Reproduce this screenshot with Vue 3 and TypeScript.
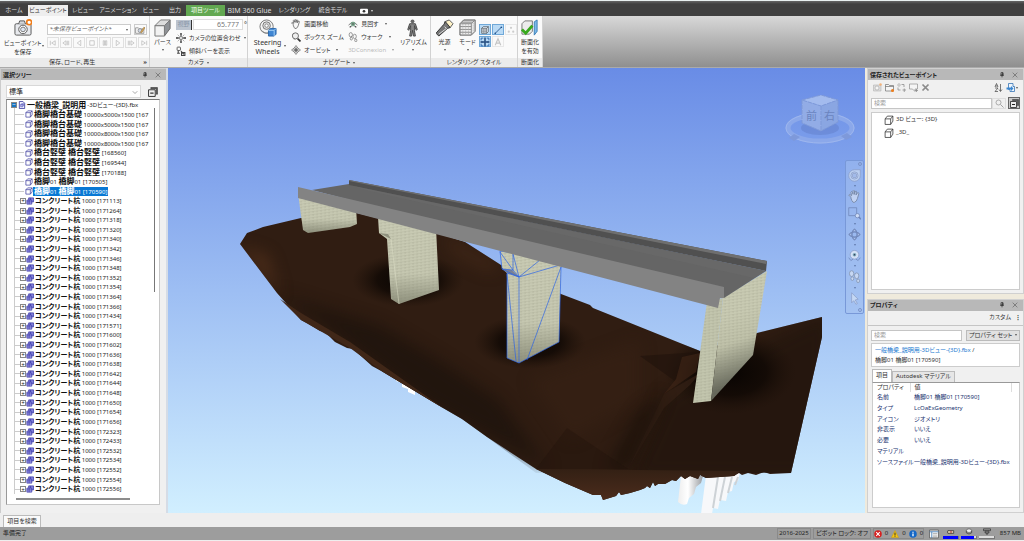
<script setup lang="ts">
import { ref } from 'vue'

const icons: Record<string, string> = {
  camera: '<rect x="1" y="5" width="17" height="12" rx="1.5" fill="#e8eaee" stroke="#555" /><path d="M5 5l1-3h5l1 3" fill="#d5d8dc" stroke="#555"/><circle cx="9.500" cy="11" r="4.500" fill="#fff" stroke="#555"/><circle cx="9.500" cy="11" r="2.500" fill="#dfe7f2" stroke="#777"/><circle cx="16" cy="3.500" r="2.600" fill="#fff" stroke="#ef7d1a" stroke-width="1.700"/>',
  folderCam: '<path d="M1 5h5l2 2h8v8H1z" fill="#f3f3f3" stroke="#666"/><circle cx="9" cy="10" r="3.500" fill="#cfd8e6" stroke="#666"/><path d="M10 13l6-9 2 1-6 9z" fill="#f0b45c" stroke="#8a6a30"/>',
  box: '<path d="M11 7l6-6v9l-6 8z" fill="#8f9296" stroke="#666"/><path d="M1 7h10v11H1z" fill="#f2f2f2" stroke="#777"/><path d="M1 7l6-6h10l-6 6z" fill="#ddd" stroke="#777"/>',
  target: '<circle cx="9" cy="9" r="3" fill="#ddd" stroke="#444"/><path d="M9 0v5M9 13v5M0 9h5M13 9h5" stroke="#333" stroke-width="2.500"/><path d="M3 3l3 3M15 3l-3 3M3 15l3-3M15 15l-3-3" stroke="#777"/>',
  tilt: '<rect x="2" y="2" width="6" height="6" rx="1" fill="#fff" stroke="#444" stroke-width="1.500"/><path d="M4 8v5M9 9l5 6M2 13h5M10 12h6v5h-6z" stroke="#444" stroke-width="2" fill="none"/>',
  wheel: '<circle cx="8" cy="8" r="7" fill="#f4f4f4" stroke="#777"/><circle cx="8" cy="7" r="4" fill="#ddd" stroke="#777"/><circle cx="8" cy="7" r="1.800" fill="#fff" stroke="#888"/><path d="M2 12q5 4 8 3" stroke="#888" fill="none"/><path d="M10 12l2-2h6v6l-2 2h-6z" fill="#3f86d3" stroke="#2b67a8"/><path d="M10 12h6v6M16 12l2-2" stroke="#a6d0f6" fill="none"/>',
  hand: '<path d="M4 10L1 7q1-2 4 1L4 3q1-2 2 0l1 3V1q1-2 2 0v5l1-4q2-1 2 1l-1 4 2-3q2-1 2 1l-2 7q-1 4-4 5H7q-2-2-3-6z" fill="#f7f7f7" stroke="#555" stroke-width="1.300"/>',
  zoom: '<path d="M2 5a5 5 0 1 1 3 8" fill="none" stroke="#666"/><circle cx="8" cy="7" r="5.500" fill="#eee" stroke="#555" stroke-width="1.500"/><path d="M12 12l5 5" stroke="#333" stroke-width="3"/>',
  orbit: '<path d="M9 1l3 4h-2v8h2l-3 4-3-4h2V5H6zM1 9l4-3v2h8V6l4 3-4 3v-2H5v2z" fill="#fff" stroke="#555" stroke-width="1.200"/>',
  look: '<path d="M1 11Q9 2 17 11" fill="none" stroke="#666" stroke-width="1.500"/><circle cx="9" cy="9" r="3.500" fill="#9fc8af" stroke="#397757"/><circle cx="9" cy="9" r="1.500" fill="#222"/><path d="M3 15l3-2M15 15l-3-2" stroke="#444" stroke-width="2"/>',
  feet: '<ellipse cx="5" cy="5" rx="3" ry="4" fill="#f7f7f7" stroke="#555"/><ellipse cx="6" cy="12" rx="2" ry="2.500" fill="#f7f7f7" stroke="#555"/><ellipse cx="12" cy="8" rx="3" ry="4" fill="#f7f7f7" stroke="#555"/><ellipse cx="14" cy="15" rx="2" ry="2.500" fill="#f7f7f7" stroke="#555"/>',
  person: '<circle cx="9" cy="2.500" r="2" fill="#666"/><path d="M6 5h6l2 6-1 1-2-5v5l1 6h-2l-1-6-1 6H6l1-6V7l-2 5-1-1z" fill="#888" stroke="#444"/>',
  lamp: '<path d="M9 3l5-2 4 4-3 4-5-1z" fill="#fff3c8" stroke="#555"/><path d="M10 3l5 6-3 1-9 8-3-3 8-9z" fill="#777" stroke="#333"/><path d="M9 8l2 2-8 6" fill="none" stroke="#ddd"/>',
  mode: '<path d="M1 5l4-4h12v12l-4 4H1z" fill="#eee" stroke="#555"/><path d="M1 5h12v12M13 5l4-4M1 8h12M1 11h12M1 14h12M4 2h12M3 4h11" fill="none" stroke="#888"/><path d="M4 5v12M7 5v12M10 5v12M15 4v11" stroke="#aaa" stroke-dasharray="1 1"/>',
  surf: '<path d="M3 6l3-3h9v9l-3 3H3zM3 6h9v9M12 6l3-3" fill="#e5f2ff" stroke="#333"/><path d="M3 9h9M3 12h9M6 6v9M9 6v9" stroke="#777"/>',
  line: '<path d="M4 15L15 4" stroke="#1d4e89" stroke-width="1.500"/><circle cx="4" cy="15" r="1.500" fill="#1d4e89"/><circle cx="15" cy="4" r="1.500" fill="#1d4e89"/>',
  dots: '<circle cx="9" cy="5" r="2" fill="#ccc"/><circle cx="5" cy="12" r="2" fill="#ccc"/><circle cx="13" cy="12" r="2" fill="#ccc"/>',
  snap: '<path d="M9 1v6M9 11v6M1 9h6M11 9h6" stroke="#123a70" stroke-width="2.500"/><path d="M2 2h4M2 2v4M16 2h-4M16 2v4M2 16h4M2 16v-4M16 16h-4M16 16v-4" stroke="#1d5ba8" stroke-width="1.500"/><circle cx="9" cy="9" r="2" fill="#123a70"/>',
  textA: '<path d="M4 15L9 3l5 12M6 11h6" fill="none" stroke="#c4c4c4" stroke-width="2"/>',
  section: '<path d="M1 5l3-3h8v11l-3 3H1z" fill="#ececec" stroke="#777"/><path d="M14 3l3-2v12l-3 4z" fill="#7cb9e8" stroke="#3a7fb8"/><path d="M1 11l4 4 7-8" fill="none" stroke="#38a81c" stroke-width="3"/>',
  cube: '<path d="M2 6l4-4h10v9l-4 5H2z" fill="#fff" stroke="#3a3a9c" stroke-width="1.600"/><path d="M2 6h10v10M12 6l4-4" fill="none" stroke="#3a3a9c" stroke-width="1.600"/>',
  group: '<path d="M6 2h11v9H6z" fill="#8684dc" stroke="#3330a0" stroke-width="1.600"/><path d="M2 7h11v9H2z" fill="#a7a5ee" stroke="#3330a0" stroke-width="1.600"/><path d="M2 11h11M7 7v9M10 2v5" stroke="#3330a0" stroke-width="1.400"/>',
  doc: '<path d="M3 1h8l4 4v12H3z" fill="#eef" stroke="#33339a" stroke-width="1.800"/><path d="M6 13V8h5v5zM6 8l2-2h5v5" fill="#b9b9f4" stroke="#33339a"/>',
  outline: '<path d="M2 7l4-5h10v9l-4 6H2zM2 7h10v10M12 7l4-5" fill="#fff" stroke="#333" stroke-width="1.400"/>',
  solid: '<path d="M5 1h12v12h-2V3H5z" fill="#666" stroke="#222"/><path d="M1 5h12v12H1z" fill="#eee" stroke="#222" stroke-width="1.600"/><path d="M4 11h6" stroke="#222" stroke-width="2"/>',
  pin: '<path d="M6 2h6v7H6zM3 10h12M9 10v6M11 2v8" fill="none" stroke="#222" stroke-width="2"/>',
  close: '<path d="M2 2l14 14M16 2L2 16" stroke="#444" stroke-width="1.500"/>',
  addCam: '<path d="M1 4h15v12H1z" fill="#ddd" stroke="#aaa"/><circle cx="8" cy="10" r="4" fill="#f5f5f5" stroke="#999"/><circle cx="15" cy="3" r="2.500" fill="#f3b27a"/>',
  addFolder: '<path d="M1 3h6l2 2h8v11H1zM1 7h16" fill="#f5f5f5" stroke="#666" stroke-width="1.300"/><circle cx="15" cy="15" r="3" fill="#ef7d1a"/>',
  swap: '<circle cx="4" cy="4" r="2.500" fill="none" stroke="#888"/><path d="M9 3h5v5M2 9v5h5M11 14h7M14.500 11v7" fill="none" stroke="#888" stroke-width="1.500"/>',
  comment: '<path d="M1 2h16v10h-5v5l-5-5H1z" fill="#f5f5f5" stroke="#888" stroke-width="1.300"/><path d="M12 15h6M15 12v6" stroke="#888" stroke-width="1.500"/>',
  del: '<path d="M3 3l12 12M15 3L3 15" stroke="#8b8b8b" stroke-width="3.500"/>',
  sort: '<path d="M2 8l3-7 3 7M3 6h4M2 10h6l-6 7h6M13 2v14M10 13l3 4 3-4" fill="none" stroke="#444" stroke-width="1.400"/>',
  importer: '<path d="M5 1h9v6h3v10H8v-4H5z" fill="#eef5fc" stroke="#2b6cb0" stroke-width="1.500"/><path d="M1 9h9V6l5 5-5 5v-3H1z" fill="#3a86d0"/>',
  search: '<circle cx="7" cy="7" r="5" fill="none" stroke="#888" stroke-width="1.300"/><path d="M11 11l6 6" stroke="#888" stroke-width="1.500"/>',
  navWheel: '<path d="M9 1h8v8a8 8 0 1 1-8-8z" fill="#bcd0f1" stroke="#8a9cc6"/><rect x="6" y="6" width="6" height="6" rx="2" fill="#a3bbea" stroke="#8a9cc6"/><circle cx="9" cy="9" r="5" fill="none" stroke="#8a9cc6"/>',
  navZoom: '<path d="M1 1h11v11H1z" fill="none" stroke="#6d83b5"/><circle cx="13" cy="12" r="3" fill="#cddcf6" stroke="#6d83b5"/><path d="M15 14l3 3" stroke="#6d83b5" stroke-width="2"/>',
  navOrbit: '<path d="M9 1l3 4H6zM9 17l3-4H6zM1 9l4-3v6zM17 9l-4-3v6z" fill="#a9bfe9" stroke="#6d83b5"/><ellipse cx="9" cy="9" rx="7" ry="3" fill="none" stroke="#6d83b5"/><ellipse cx="9" cy="9" rx="3" ry="7" fill="none" stroke="#6d83b5"/>',
  navLook: '<circle cx="9" cy="8" r="6" fill="#d3e0f6" stroke="#8a9cc6"/><circle cx="9" cy="8" r="2.500" fill="#7ba8b8"/><circle cx="9" cy="8" r="1" fill="#335"/><path d="M1 12l3 4 3-2M17 12l-3 4-3-2" fill="none" stroke="#6d83b5"/>',
  pointer: '<path d="M5 1l9 9-4 1 3 5-2 1-3-5-3 3z" fill="#c5d8f4" stroke="#8a9cc6"/>',
  error: '<circle cx="9" cy="9" r="8.500" fill="#d81e1e"/><path d="M5 5l8 8M13 5l-8 8" stroke="#fff" stroke-width="2.500"/>',
  warn: '<path d="M9 1l8 16H1z" fill="#f6c515" stroke="#c99a00"/><path d="M9 6v6M9 13v2" stroke="#222" stroke-width="2"/>',
  info: '<circle cx="9" cy="9" r="8.500" fill="#1467c6"/><path d="M9 8v6M9 4v2" stroke="#fff" stroke-width="3"/>',
  sheet: '<path d="M1 2h16v14H1z" fill="#fff" stroke="#444" stroke-width="1.200"/><path d="M1 5h16M5 5v11" stroke="#3c78b4" stroke-width="1.500"/><path d="M7 8h8M7 11h8M7 14h8" stroke="#777"/>',
  pencil: '<path d="M2 6h13v6H2l-1-3z" fill="#e8d4b6" stroke="#222" stroke-width="1.500"/><path d="M9 6v6" stroke="#a22" stroke-width="2"/>',
  disk: '<ellipse cx="9" cy="6" rx="6" ry="4" fill="#eee" stroke="#333"/><path d="M3 6v5q6 5 12 0V6" fill="none" stroke="#333" stroke-width="1.500"/>',
  net: '<path d="M1 2h16v4H1zM9 6v9M3 9l6 5 6-5M6 6v5M12 6v5" fill="none" stroke="#222" stroke-width="1.400"/>',
  media: '<rect x="0" y="4" width="18" height="11" rx="2" fill="#fff"/><circle cx="9" cy="9.500" r="3" fill="#333"/>',
}

const tabs = [
  { t: 'ホーム', w: 28 }, { t: 'ビューポイント', w: 40 }, { t: 'レビュー', w: 30 }, { t: 'アニメーション', w: 40 },
  { t: 'ビュー', w: 26 }, { t: '出力', w: 22 }, { t: '項目ツール', w: 39 }, { t: 'BIM 360 Glue', w: 49 },
  { t: 'レンダリング', w: 41 }, { t: '統合モデル', w: 36 },
]
const transport = ['M3 4v10M14 4L6 9l8 5z', 'M9 4L2 9l7 5zM12 4v10M15 4v10', 'M13 3L5 9l8 6z', 'M4 4h10v10H4z', 'M5 4h3v10H5zM10 4h3v10h-3z', 'M5 3l8 6-8 6z', 'M3 4v10M6 4v10M9 4l7 5-7 5z', 'M4 4l8 5-8 5zM15 4v10']

interface Node { kind: string; name: string; tail: string }
const solids: Node[] = [
  ...['10000x5000x1500 [167', '10000x5000x1500 [167', '10000x8000x1500 [167', '10000x8000x1500 [167'].map(t => ({ kind: 'solid', name: '橋脚橋台基礎', tail: t })),
  ...['168560', '169544', '170188'].map(t => ({ kind: 'solid', name: '橋台竪壁 橋台竪壁', tail: `[${t}]` })),
  ...['170505', '170590'].map(t => ({ kind: 'pier', name: '橋脚', tail: `[${t}]` })),
]
const piles = '171113 171264 171318 171320 171340 171342 171346 171348 171352 171354 171364 171366 171434 171571 171600 171602 171636 171638 171642 171644 171648 171650 171654 171656 172323 172433 172532 172534 172552 172554 172556'.split(' ')
const nodes: Node[] = [...solids, ...piles.map(p => ({ kind: 'pile', name: 'コンクリート杭', tail: `1000 [${p}]` }))]
const selected = ref('[170590]')

const props = [
  ['名前', '橋脚01 橋脚01 [170590]'], ['タイプ', 'LcOaExGeometry'], ['アイコン', 'ジオメトリ'],
  ['非表示', 'いいえ'], ['必要', 'いいえ'], ['マテリアル', ''], ['ソースファイル', '一般橋梁_説明用-3Dビュー-{3D}.fbx'],
]
const navTools = [
  { i: 'navWheel', l: 'ホイール', d: true }, { i: 'hand', l: '画面移動', d: false }, { i: 'navZoom', l: 'ズーム', d: true },
  { i: 'navOrbit', l: 'オービット', d: true }, { i: 'navLook', l: '見回す', d: true }, { i: 'feet', l: 'ウォーク', d: true }, { i: 'pointer', l: '選択', d: false },
]
const meters = [{ i: 'pencil', v: 100 }, { i: 'disk', v: 92 }, { i: 'net', v: 0 }]
</script>

<template>
  <div class="app">
    <header>
      <div class="topline"></div>
      <nav class="tabs">
        <button v-for="(tab, n) in tabs" :key="tab.t" class="tab" :class="{ active: n === 1, ctx: n === 6, latin: n === 7 }" :style="{ width: tab.w + 'px' }">{{ tab.t }}</button>
        <button class="media" aria-label="表示切替"><svg class="i8" viewBox="0 0 18 18" v-html="icons.media"></svg><i class="dn"></i></button>
      </nav>
      <div class="ribbon">
        <section class="group g1">
          <div class="body">
            <button class="big b1"><svg class="i18" viewBox="0 0 19 19" v-html="icons.camera"></svg><span>ビューポイント<br>を保存</span></button>
            <i class="dn low"></i>
            <div class="stack">
              <div class="line">
                <button class="combo"><em>*未保存ビューポイント*</em><i class="dn"></i></button>
                <button class="tool"><svg class="i10" viewBox="0 0 18 18" v-html="icons.folderCam"></svg></button>
              </div>
              <div class="transport">
                <button v-for="p in transport" :key="p"><svg class="i8" viewBox="0 0 18 18"><path :d="p" fill="none" stroke="#b5b5b5" stroke-width="1.5" /></svg></button>
              </div>
            </div>
          </div>
          <footer><span>保存、ロード、再生</span><b class="corner">»</b></footer>
        </section>
        <section class="group g2">
          <div class="body">
            <button class="big b2"><svg class="i18" viewBox="0 0 19 19" v-html="icons.box"></svg><span>パース</span><i class="dn"></i></button>
            <div class="stack">
              <div class="line fov"><label for="fov">視野</label><input id="fov" value="65.777"><span>°</span></div>
              <button class="cmd"><svg class="i10" viewBox="0 0 18 18" v-html="icons.target"></svg><span class="k">カメラの位置合わせ</span><i class="dn"></i></button>
              <button class="cmd"><svg class="i10" viewBox="0 0 18 18" v-html="icons.tilt"></svg><span class="k">傾斜バーを表示</span></button>
            </div>
          </div>
          <footer><span>カメラ</span><i class="dn"></i></footer>
        </section>
        <section class="group g3">
          <div class="body">
            <button class="big b3"><svg class="i18" viewBox="0 0 19 19" v-html="icons.wheel"></svg><span class="latin">Steering<br>Wheels</span></button>
            <i class="dn low"></i>
            <div class="stack s3a">
              <button class="cmd"><svg class="i10" viewBox="0 0 18 18" v-html="icons.hand"></svg><span class="k">画面移動</span></button>
              <button class="cmd"><svg class="i10" viewBox="0 0 18 18" v-html="icons.zoom"></svg><span class="k">ボックス ズーム</span><i class="dn"></i></button>
              <button class="cmd"><svg class="i10" viewBox="0 0 18 18" v-html="icons.orbit"></svg><span class="k">オービット</span><i class="dn"></i></button>
            </div>
            <div class="stack s3b">
              <button class="cmd"><svg class="i10" viewBox="0 0 18 18" v-html="icons.look"></svg><span class="k">見回す</span><i class="dn"></i></button>
              <button class="cmd"><svg class="i10" viewBox="0 0 18 18" v-html="icons.feet"></svg><span class="k">ウォーク</span><i class="dn"></i></button>
              <button class="cmd off" disabled><span class="k">3DConnexion</span><i class="dn"></i></button>
            </div>
            <button class="big b4"><svg class="i18" viewBox="0 0 19 19" v-html="icons.person"></svg><span>リアリズム</span><i class="dn"></i></button>
          </div>
          <footer><span>ナビゲート</span><i class="dn"></i></footer>
        </section>
        <section class="group g4">
          <div class="body">
            <button class="big b5"><svg class="i18" viewBox="0 0 19 19" v-html="icons.lamp"></svg><span>光源</span><i class="dn"></i></button>
            <button class="big b5"><svg class="i18" viewBox="0 0 19 19" v-html="icons.mode"></svg><span>モード</span><i class="dn"></i></button>
            <div class="toggles">
              <button v-for="(n, k) in ['surf', 'line', 'dots', 'snap', 'textA']" :key="n" :class="{ on: k < 2 || k === 3 }"><svg class="i10" viewBox="0 0 18 18" v-html="icons[n]"></svg></button>
            </div>
          </div>
          <footer><span>レンダリング スタイル</span></footer>
        </section>
        <section class="group g5">
          <div class="body"><button class="big b5"><svg class="i18" viewBox="0 0 19 19" v-html="icons.section"></svg><span>断面化<br>を有効</span></button></div>
          <footer><span>断面化</span></footer>
        </section>
      </div>
    </header>

    <main>
      <aside class="left">
        <div class="title"><h2>選択ツリー</h2><button aria-label="固定"><svg class="i7" viewBox="0 0 18 18" v-html="icons.pin"></svg></button><button aria-label="閉じる"><svg class="i7" viewBox="0 0 18 18" v-html="icons.close"></svg></button></div>
        <div class="pick">
          <select aria-label="ツリーの種類"><option>標準</option></select>
          <svg class="chev" viewBox="0 0 8 8"><path d="M1 3l3 3 3-3" fill="none" stroke="#888" /></svg>
          <button aria-label="選択解除"><svg class="i10" viewBox="0 0 18 18" v-html="icons.solid"></svg></button>
        </div>
        <div class="treebox">
          <ul class="tree">
            <li class="root"><i class="pm">−</i><svg class="i8" viewBox="0 0 18 18" v-html="icons.doc"></svg><b>一般橋梁_説明用</b><span>-3Dビュー-{3D}.fbx</span></li>
            <li v-for="(n, k) in nodes" :key="k" :class="[n.kind, { sel: n.tail === selected }]" @click="selected = n.tail">
              <i class="guide"></i><i v-if="n.kind === 'pile'" class="pm">+</i>
              <svg class="i8" viewBox="0 0 18 18" v-html="n.kind === 'pile' ? icons.group : icons.cube"></svg>
              <span class="txt"><template v-if="n.kind === 'pier'"><b>橋脚</b>01 <b>橋脚</b>01</template><b v-else>{{ n.name }}</b> {{ n.tail }}</span>
            </li>
          </ul>
          <div class="hbar"></div>
          <div class="vbar"></div>
        </div>
      </aside>

      <section class="view">
        <svg class="scene" viewBox="168 68 697 445" preserveAspectRatio="xMidYMid slice" role="img" aria-label="橋梁モデル">
          <defs>
            <linearGradient id="sky" x2="0" y2="1"><stop offset="0" stop-color="#698ce6" /><stop offset=".5" stop-color="#9dbef3" /><stop offset="1" stop-color="#d1efff" /></linearGradient>
            <linearGradient id="conc" x2="0" y2="1"><stop offset="0" stop-color="#c9cbb4" /><stop offset=".65" stop-color="#c5c7b0" /><stop offset="1" stop-color="#8e907c" /></linearGradient>
            <linearGradient id="wall" gradientUnits="userSpaceOnUse" x1="715" y1="320" x2="738" y2="384"><stop offset="0" stop-color="#c8cab2" /><stop offset=".4" stop-color="#bfc1a9" /><stop offset="1" stop-color="#65675a" /></linearGradient>
            <linearGradient id="skirt" x2="0" y2="1"><stop offset="0" stop-color="#332014" /><stop offset="1" stop-color="#4b2c1c" /></linearGradient>
            <linearGradient id="pile"><stop offset="0" stop-color="#eee" /><stop offset=".4" stop-color="#fff" /><stop offset="1" stop-color="#999ca0" /></linearGradient>
            <radialGradient id="shade"><stop offset="0" stop-color="#080402" /><stop offset=".55" stop-color="#0f0804" stop-opacity=".8" /><stop offset="1" stop-color="#1d1109" stop-opacity="0" /></radialGradient>
            <pattern id="brick" width="4" height="3" patternUnits="userSpaceOnUse" patternTransform="skewY(-8)"><path d="M0 0h4M1 0v2" stroke="#777b65" stroke-width=".5" opacity=".4" /></pattern>
            <filter id="soft" x="-50%" y="-50%" width="200%" height="200%" color-interpolation-filters="sRGB"><feGaussianBlur stdDeviation="8" /></filter>
            <clipPath id="ground"><path d="M240 244L247 233 263 227 301 218 357 213 377 218 437 233 465 242 501 265 561 294 590 305 593 308 700 351 757 333 822 317 822 337 791 473H536L487 437 462 419 443 408 383 372 350 347 301 320 277 293z" /></clipPath>
          </defs>
          <path d="M168 68h697v445H168z" fill="url(#sky)" />
          <path d="M391 375l5 1v5l6 2v4l6 2v3l7 3v-6l-18-14z" fill="#fff" />
          <path d="M681 476l-3 26q4 4 9 2l2-6 5-4 2-7 5-4 2-7z" fill="url(#pile)" />
          <path d="M706 475l-5 39h11l1-6 5 1 2-9 6 1 2-9 4-1 2-9 4-1 2-9z" fill="#f7f8fa" />
          <path d="M718 477l-5 31M725 477l-5 24M732 477l-4 16M738 477l-3 8" stroke="#cdd2d6" stroke-width="2" />
          <path d="M240 244L247 233 263 227 301 218 357 213 377 218 437 233 465 242 501 265 561 294 590 305 593 308 700 351 757 333 822 317 822 337 791 473 770 474 764 472 756 475 748 473 742 475 739 473 734 476 706 478 700 475 698 479 690 476 685 479 681 476 676 481 672 480 665 484 658 484 655 486 653 482 650 488 647 486 645 488 640 490 630 493 621 495 619 492 616 496 603 500 601 495 593 495 565 483 536 469 487 437 462 419 443 408 383 372 372 366 353 349 347 348 335 342 325 332 320 331 307 323 301 320 293 311 277 293z" fill="#301d12" />
          <g clip-path="url(#ground)">
            <path d="M628 480L664 394 700 373 830 310V480z" fill="#23160e" opacity=".8" filter="url(#soft)" />
            <path d="M277 293L380 325 440 360 500 400 550 470 430 405 350 345z" fill="#1f140d" opacity=".85" filter="url(#soft)" />
            <path d="M530 380L640 340 640 400 570 440z" fill="#382215" opacity=".6" filter="url(#soft)" />
            <path d="M236 246L280 298 268 255z" fill="#55331d" opacity=".7" filter="url(#soft)" />
            <path d="M440 233L501 265 490 272 455 255z" fill="#4a2d1b" opacity=".6" filter="url(#soft)" />
            <ellipse cx="408" cy="280" rx="56" ry="27" fill="url(#shade)" />
            <ellipse cx="530" cy="342" rx="56" ry="27" fill="url(#shade)" />
            <ellipse cx="730" cy="372" rx="66" ry="42" fill="url(#shade)" />
            <path d="M640 356L700 352 682 368 675 381z" fill="#20130b" opacity=".6" />
            <path d="M682 357L700 353 696 372 664 394 676 379z" fill="#412718" opacity=".6" />
            <path d="M664 394L700 373 690 385 664 408 628 469z" fill="#352115" opacity=".7" />
            <path d="M664 394L628 469 606 469 640 410z" fill="#1b110a" opacity=".8" filter="url(#soft)" />
            <path d="M536 469L567 428 628 469z" fill="#1d120b" opacity=".3" />
          </g>
          <path d="M280 299L301 313 350 342 443 408 383 372 350 348 301 320z" fill="#402718" />
          <path d="M536 469L740 471 734 476 706 478 700 475 698 479 690 476 685 479 681 476 676 481 672 480 665 484 658 484 655 486 653 482 650 488 647 486 645 488 640 490 630 493 621 495 619 492 616 496 603 500 601 495 593 495 565 483z" fill="url(#skirt)" />
          <g><path d="M298 193L303 230 308 233 350 227 357 224 356 208z" fill="url(#conc)" /><path d="M298 193L303 230 308 233 350 227 357 224 356 208z" fill="url(#brick)" /></g>
          <g><path d="M378 217L379 233 387 239 391 299 399 304 439 290 436 228z" fill="url(#conc)" /><path d="M378 217L379 233 387 239 391 299 399 304 439 290 436 228z" fill="url(#brick)" /><path d="M379 233L391 239 388 234z" fill="#8f917e" /><path d="M391 239L399 304" stroke="#dfe1c8" stroke-width=".7" opacity=".7" /></g>
          <g><path d="M500 248L502 268 507 273 507 358 519 363 559 342 561 263z" fill="url(#conc)" /><path d="M500 248L502 268 507 273 507 358 519 363 559 342 561 263z" fill="url(#brick)" /><path d="M502 269L512 270 519 277 507 273z" fill="#7b8293" />
            <path d="M500 251L513 253V270L502 269zM502 269L519 277 507 273V358L519 363V277L513 270M500 252L513 270M513 254L519 277M519 277L540 260M519 277L560 265M519 363L559 342 561 267 527 360M507 274L516 361" fill="none" stroke="#2862e8" stroke-width=".8" opacity=".85" /></g>
          <path d="M707 302L693 403 711 401 723 298z" fill="#c2c5ad" /><path d="M707 302L693 403 711 401 723 298z" fill="url(#brick)" />
          <path d="M723 298L767 271 753 355 711 401z" fill="url(#wall)" /><path d="M723 298L767 271 753 355 711 401z" fill="url(#brick)" />
          <path d="M312 190L349 184 766 271 724 298z" fill="#656565" />
          <path d="M349 180L767 261 766 271 349 185z" fill="#505050" />
          <path d="M349 180L767 261 766 264 349 181z" fill="#6f6f6f" />
          <path d="M349 185L766 271 754 278 370 191z" fill="#6b6b6b" opacity=".5" />
          <path d="M298 187L724 287V298H720L718 308 298 198z" fill="#838383" />
        </svg>
        <svg class="viewcube" viewBox="0 0 72 52" role="img" aria-label="ビューキューブ">
          <ellipse cx="36" cy="33" rx="32" ry="13" fill="none" stroke="#8ba8ea" stroke-width="5" />
          <ellipse cx="36" cy="33" rx="34" ry="15" fill="none" stroke="#9db6ee" stroke-width="1" />
          <ellipse cx="36" cy="33" rx="19" ry="7" fill="#6583cf" opacity=".6" />
          <path d="M18 5L37 0 54 5 37 11z" fill="#a3bbee" /><path d="M18 5L37 11V36L18 28z" fill="#92ace6" /><path d="M54 5L37 11V36L54 27z" fill="#8aa6e2" />
          <path d="M18 5L37 0 54 5 37 11zM18 5V28L37 36 54 27V5M37 11V36" fill="none" stroke="#7e99d8" stroke-dasharray="4 1" />
          <text x="22" y="25" font-size="11" fill="#6a84bf">前</text><text x="40" y="25" font-size="11" fill="#6a84bf">右</text>
          <path d="M5 43l5-4 6 3-6 4zM57 41l6-3 5 4-6 3z" fill="#7e99da" />
        </svg>
        <nav class="navbar">
          <i class="ring"></i>
          <template v-for="n in navTools" :key="n.i"><button :aria-label="n.l"><svg class="i13" :class="{ faint: n.i === 'hand' || n.i === 'feet' }" viewBox="0 0 18 18" v-html="icons[n.i]"></svg></button><i v-if="n.d" class="dn"></i></template>
          <i class="ring"></i>
        </nav>
      </section>

      <aside class="right">
        <section class="saved">
          <div class="title"><h2>保存されたビューポイント</h2><button aria-label="固定"><svg class="i7" viewBox="0 0 18 18" v-html="icons.pin"></svg></button><button aria-label="閉じる"><svg class="i7" viewBox="0 0 18 18" v-html="icons.close"></svg></button></div>
          <div class="bar">
            <button v-for="n in ['addCam', 'addFolder', 'swap', 'comment', 'del']" :key="n" :aria-label="n"><svg class="i9" viewBox="0 0 18 18" v-html="icons[n]"></svg></button>
            <span class="grow"></span>
            <button aria-label="並べ替え"><svg class="i9" viewBox="0 0 18 18" v-html="icons.sort"></svg></button>
            <button aria-label="読み込み"><svg class="i9" viewBox="0 0 18 18" v-html="icons.importer"></svg><i class="dn"></i></button>
          </div>
          <div class="find"><input type="text" placeholder="検索" aria-label="ビューポイントを検索"><button class="mag" aria-label="検索"><svg class="i9" viewBox="0 0 18 18" v-html="icons.search"></svg></button><button class="press" aria-label="折りたたむ"><svg class="i9" viewBox="0 0 18 18" v-html="icons.solid"></svg></button></div>
          <ul class="views"><li><svg class="i10" viewBox="0 0 18 18" v-html="icons.outline"></svg>3D ビュー: {3D}</li><li><svg class="i10" viewBox="0 0 18 18" v-html="icons.outline"></svg>_3D_</li></ul>
        </section>
        <section class="props">
          <div class="title"><h2>プロパティ</h2><button aria-label="固定"><svg class="i7" viewBox="0 0 18 18" v-html="icons.pin"></svg></button><button aria-label="閉じる"><svg class="i7" viewBox="0 0 18 18" v-html="icons.close"></svg></button></div>
          <div class="custom"><button>カスタム</button><b>⋮</b></div>
          <div class="find pf"><input type="text" placeholder="検索" aria-label="プロパティを検索"><button class="set"><span>プロパティ セット</span><i class="dn"></i></button></div>
          <div class="crumb"><div><a href="#">一般橋梁_説明用-3Dビュー-{3D}.fbx</a> /</div><div>橋脚01 橋脚01 [170590]</div></div>
          <div class="ptabs"><button class="active">項目</button><button>Autodesk マテリアル</button></div>
          <div class="tablebox">
            <table><thead><tr><th>プロパティ</th><th>値</th></tr></thead>
              <tbody><tr v-for="p in props" :key="p[0]"><td>{{ p[0] }}</td><td>{{ p[1] }}</td></tr></tbody></table>
          </div>
        </section>
      </aside>
    </main>

    <div class="dock"><button>項目を検索</button></div>
    <footer class="status">
      <span class="ready">準備完了</span>
      <span class="cell c1">2016-2025</span><span class="cell c2">ピボット ロック: オフ</span>
      <span class="cell counts"><svg class="i8" viewBox="0 0 18 18" v-html="icons.error"></svg>0<svg class="i8" viewBox="0 0 18 18" v-html="icons.warn"></svg>0<svg class="i8" viewBox="0 0 18 18" v-html="icons.info"></svg>0</span>
      <button class="sheet" aria-label="シート"><svg class="i10" viewBox="0 0 18 18" v-html="icons.sheet"></svg></button>
      <span v-for="m in meters" :key="m.i" class="meter"><svg class="i8" viewBox="0 0 18 18" v-html="icons[m.i]"></svg><i class="track"><i :style="{ width: m.v + '%' }"></i></i></span>
      <span class="mem">857 MB</span>
    </footer>
  </div>
</template>

<style>
html, body { background: #eee; }
</style>
<style scoped>
* { box-sizing: border-box; }
.app { min-height: 100vh; display: flex; flex-direction: column; font: 7px/9px "Noto Sans", "Noto Sans CJK JP", sans-serif; font-feature-settings: "palt"; color: #333; white-space: nowrap; background: #eee; overflow: hidden; }
button, input, select { font: inherit; font-feature-settings: inherit; color: inherit; background: none; border: 0; padding: 0; margin: 0; border-radius: 0; white-space: nowrap; }
button { display: flex; align-items: center; justify-content: center; }
svg { display: block; flex: none; }
ul { list-style: none; margin: 0; padding: 0; }
h2 { margin: 0; }
.k { font-size: 6px; }
.i7 { width: 6px; height: 6px; } .i8 { width: 8px; height: 8px; } .i9 { width: 9px; height: 9px; } .i10 { width: 10px; height: 10px; } .i13 { width: 13px; height: 13px; } .i18 { width: 18px; height: 18px; }
.dn { width: 0; height: 0; flex: none; border: 1px solid transparent; border-top: 2px solid #555; border-bottom: 0; }
.topline { height: 1px; background: #e8f0f0; }
.tabs { height: 15px; display: flex; background: linear-gradient(#666, #404040 3px); padding-top: 4px; }
.tab { color: #ddd; font-size: 6px; padding-bottom: 1px; }
.tab.latin { font-size: 7px; }
.tab.active { background: #eee; color: #333; }
.tab.ctx { background: #62a851; color: #f2fff0; }
.media { gap: 3px; width: 30px; }
.media .dn { border-top-color: #ddd; }
.ribbon { height: 52px; display: flex; background: linear-gradient(#d8d8d8, #8f8f8f); border-bottom: 1px solid #aaa; }
.group { display: flex; flex-direction: column; background: #fafafa; border-right: 1px solid #d2d2d2; }
.g1 { width: 150px; } .g2 { width: 98px; } .g3 { width: 183px; } .g4 { width: 87px; } .g5 { width: 25px; }
.body { flex: 1; display: flex; padding-top: 3px; }
.group footer { height: 9px; background: #ebebeb; display: flex; align-items: center; justify-content: center; gap: 3px; font-size: 6px; line-height: 9px; }
.g1 footer { padding-left: 4px; }
.corner { font-size: 6px; margin-left: auto; padding-right: 2px; }
.g1 footer span { margin-left: auto; }
.big { flex-direction: column; justify-content: flex-start; gap: 1px; font-size: 6px; }
.b1 { width: 38px; margin-left: 4px; }
.b1 .i18 { margin-bottom: 1px; }
.b2 { width: 25px; } .b3 { width: 34px; margin-left: 3px; font-size: 7px; } .b4 { width: 34px; } .b5 { width: 24px; }
.b2 .dn, .b4 .dn, .b5 .dn { margin-top: 1px; }
.low { margin-top: 26px; }
.stack { display: flex; flex-direction: column; }
.g1 .stack { padding: 5px 0 0 3px; gap: 2px; }
.line { display: flex; align-items: center; }
.combo { width: 84px; height: 11px; border: 1px solid #ccc; background: #fff; justify-content: space-between; padding: 0 2px; color: #666; font-size: 6px; }
.tool { width: 13px; height: 11px; border: 1px solid #ccc; margin-left: 3px; }
.transport { display: flex; gap: 1px; }
.transport button { width: 12px; height: 11px; border: 1px solid #e0e0e0; }
.g2 .stack { gap: 3px; padding-left: 1px; }
.fov { height: 11px; gap: 1px; }
.fov label { width: 16px; height: 10px; background: #bcc4cf; color: #8b98aa; text-align: center; border-right: 1px solid #333; font-size: 6px; }
.fov input { width: 50px; height: 11px; border: 1px solid #ddd; text-align: right; padding-right: 3px; background: #fff; color: #777; }
.cmd { height: 10px; gap: 3px; justify-content: flex-start; }
.g3 .stack { gap: 3px; } .s3a { width: 57px; margin-left: 5px; } .s3b { width: 50px; }
.g3 .cmd .dn { margin-left: 3px; }
.off { color: #bbb; } .off .dn { border-top-color: #999; }
.g4 .body { padding-left: 2px; }
.toggles { display: grid; grid-template-columns: repeat(3, 12px); grid-auto-rows: 11px; gap: 1px; padding: 5px 0 0 0; }
.toggles button { border: 1px solid #e8e8e8; }
.toggles .on { background: #b9daf5; border-color: #6fa8d8; }
main { flex: 1; display: grid; grid-template-columns: 168px 1fr 159px; min-height: 0; }
.title { height: 12px; background: #b8b8b8; display: flex; align-items: center; gap: 7px; padding: 0 5px 0 2px; color: #222; border-top: 1px solid #d0d0d0; }
.title h2 { font-size: 6px; line-height: 10px; font-weight: 700; flex: 1; }
.left { display: flex; flex-direction: column; background: #f0f0f0; border-right: 2px solid #d5dce6; border-left: 1px solid #ccc; }
.pick { display: flex; align-items: center; padding: 5px 7px 0 5px; }
.pick select { appearance: none; width: 136px; height: 13px; border: 1px solid #d8d8d8; background: #fff; padding-left: 2px; color: #222; }
.chev { width: 6px; height: 6px; margin-left: -9px; margin-right: 9px; }
.pick button { width: 12px; height: 12px; }
.treebox { flex: 1; margin: 1px 6px 8px 5px; background: #fff; border: 1px solid #c8c8c8; border-top-color: #777; border-left-color: #999; display: grid; grid-template-columns: 1fr 9px; grid-template-rows: 1fr 10px; overflow: hidden; }
.tree { display: flex; flex-direction: column; overflow: hidden; min-width: 0; font-size: 6px; line-height: 8px; color: #222; background: linear-gradient(#ccc, #ccc) 7px 6px / 1px 100% no-repeat; }
.tree li { flex: 1; display: flex; align-items: center; min-height: 0; }
.tree b { font-size: 8px; font-weight: 700; color: #111; }
.tree .pile b { font-size: 7px; }
.root { padding-left: 4px; gap: 1px; }
.pm { font: 6px/5px "Liberation Mono", monospace; width: 6px; height: 6px; border: 1px solid #888; display: flex; align-items: center; justify-content: center; background: #fff; flex: none; }
.root .pm { background: #1875c4; color: #fff; }
.guide { width: 9px; height: 1px; background: #ccc; margin-left: 8px; margin-right: 1px; flex: none; }
.pile .guide { width: 5px; margin-right: 0; }
.txt { padding: 0 1px; }
.tree .sel .txt { background: #0878d4; color: #fff; } .tree .sel b { color: #fff; }
.hbar { height: 2px; background: #8c8c8c; margin: 4px 20px 0 9px; grid-row: 2; }
.vbar { grid-row: 1; grid-column: 2; width: 1px; height: 184px; background: #777; margin: 8px 0 0 4px; }
.view { position: relative; min-width: 0; overflow: hidden; }
.scene { position: absolute; inset: 0; width: 100%; height: 100%; }
.viewcube { position: absolute; top: 27px; right: 9px; width: 72px; height: 52px; }
.navbar { position: absolute; top: 92px; right: 1px; width: 19px; height: 154px; border: 1px solid #7898d8; border-radius: 2px; background: rgba(166, 193, 240, .5); display: flex; flex-direction: column; align-items: center; justify-content: space-between; padding: 1px 0; }
.navbar .dn { border-top-color: #6079ac; }
.faint { opacity: .45; }
.ring { width: 4px; height: 4px; border: 1px solid #7b93c8; border-radius: 50%; align-self: flex-end; margin-right: 1px; }
.right { display: flex; flex-direction: column; gap: 5px; background: #efeadc; border-left: 2px solid #efeadc; }
.saved, .props { display: flex; flex-direction: column; background: #f0f0f0; border: 1px solid #d0d0d0; border-top: 0; }
.saved { flex: 226; } .props { flex: 214; }
.bar { height: 15px; display: flex; align-items: center; padding: 0 5px; gap: 3px; }
.bar .dn { margin-left: 1px; } .grow { flex: 1; }
.find { display: flex; padding: 2px 3px 2px 3px; align-items: center; }
.find input { flex: 1; min-width: 0; height: 11px; border: 1px solid #c5c5c5; background: #fff; padding-left: 2px; font-size: 6px; }
.find input::placeholder { color: #999; }
.mag { width: 14px; height: 11px; border: 1px solid #ddd; }
.press { width: 12px; height: 12px; background: #c8c8c8; border: 1px solid #666; margin-left: 2px; }
.views { flex: 1; margin: 1px 3px 3px; background: #fff; border: 1px solid #ccc; }
.views li { height: 13px; display: flex; align-items: center; gap: 2px; padding-left: 12px; font-size: 6px; }
.custom { height: 15px; display: flex; align-items: center; justify-content: flex-end; gap: 4px; padding-right: 2px; border-bottom: 1px solid #c5c5c5; font-size: 6px; }
.pf { padding-top: 4px; }
.set { width: 54px; height: 11px; margin-left: 4px; border: 1px solid #bbb; background: #e1e1e1; font-size: 6px; justify-content: space-between; padding: 0 2px; }
.crumb { margin: 0 3px; height: 24px; background: #fff; border: 1px solid #ccc; padding: 1px 3px; font-size: 6px; line-height: 10px; }
.crumb a { color: #1878d0; text-decoration: none; }
.ptabs { display: flex; align-items: flex-end; padding: 2px 0 0 4px; font-size: 6px; }
.ptabs button { height: 11px; border: 1px solid #bbb; border-bottom: 0; padding: 0 3px; background: #e6e6e6; }
.ptabs .active { height: 13px; background: #fff; }
.tablebox { flex: 1; background: #fff; border: 1px solid #ccc; border-top-color: #999; margin: 0 3px 4px 4px; }
table { border-collapse: collapse; width: 95%; height: 85px; table-layout: fixed; font-size: 6px; line-height: 9px; }
th, td { text-align: left; padding: 0 0 0 4px; font-weight: 400; overflow: visible; color: #20336f; }
th { color: #333; border-right: 1px solid #ddd; } th:first-child { width: 37px; }
.dock { height: 14px; padding: 2px 3px 0; }
.dock button { width: 38px; height: 12px; border: 1px solid #bbb; border-bottom: 0; background: #fafafa; font-size: 6px; }
.status { height: 14px; background: #9d9d9d; border-bottom: 1px solid #eee; display: flex; align-items: center; padding: 0 3px; font-size: 6px; color: #222; gap: 3px; }
.ready { flex: 1; }
.cell { height: 11px; border: 1px solid #8a8a8a; display: flex; align-items: center; justify-content: center; }
.c1 { width: 34px; } .c2 { width: 58px; margin: 0 -1px; }
.counts { width: 51px; gap: 3px; }
.sheet { width: 13px; height: 11px; }
.meter { width: 15px; display: flex; flex-direction: column; align-items: center; }
.track { width: 16px; height: 3px; background: #ddd; border: 1px solid #777; border-width: 0 1px 1px 0; }
.track i { display: block; height: 3px; background: #00f; }
.mem { width: 24px; text-align: right; }
</style>
